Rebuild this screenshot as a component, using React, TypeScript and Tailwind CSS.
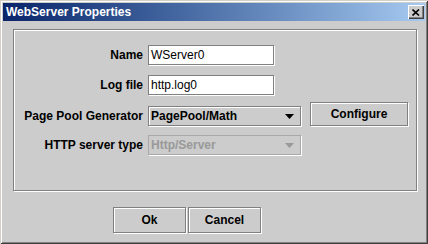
import React from 'react';

const font = { fontFamily: '"Liberation Sans", Arial, sans-serif' };

const Field = ({ value }: { value: string }) => (
  <div className="w-[126px] h-[20px] bg-white border border-[#808080] shadow-[1px_1px_0_#ffffff] flex items-center pl-[2px] text-[12px] text-black">
    {value}
  </div>
);

const Arrow = ({ color }: { color: string }) => (
  <svg width="9" height="5" viewBox="0 0 9 5" className="shrink-0">
    <polygon points="0,0 9,0 4.5,5" fill={color} />
  </svg>
);

const Combo = ({ value, disabled }: { value: string; disabled?: boolean }) => (
  <div
    className={
      disabled
        ? 'w-[153px] h-[20px] border border-[#a8a8a8] shadow-[1px_1px_0_#ffffff] flex items-center justify-between pl-[2px] pr-[6px] text-[12px] font-bold text-[#999999]'
        : 'w-[153px] h-[20px] border border-[#808080] shadow-[1px_1px_0_#ffffff,inset_1px_1px_0_#ffffff] flex items-center justify-between pl-[2px] pr-[6px] text-[12px] font-bold text-black'
    }
  >
    <span>{value}</span>
    <Arrow color={disabled ? '#999999' : '#000000'} />
  </div>
);

const Button = ({ label, className }: { label: string; className: string }) => (
  <div
    className={
      'border border-[#808080] shadow-[1px_1px_0_#ffffff,inset_1px_1px_0_#ffffff] flex items-center justify-center text-[12px] font-bold text-black ' +
      className
    }
  >
    {label}
  </div>
);

const Label = ({ text }: { text: string }) => (
  <div className="w-[129px] text-right text-[12px] font-bold text-black mr-[5px]">{text}</div>
);

export default function App() {
  return (
    <div
      style={font}
      className="w-[428px] h-[244px] bg-[#cccccc] p-[3px] flex flex-col shadow-[inset_1px_1px_0_#d4d0c8,inset_-1px_-1px_0_#404040,inset_2px_2px_0_#ffffff,inset_-2px_-2px_0_#808080]"
    >
      <div className="h-[18px] bg-linear-to-r from-[#0a246a] to-[#a6caf0] flex items-center justify-between pl-[3px] pr-[1px]">
        <span className="text-white font-bold text-[12px] leading-none">WebServer Properties</span>
        <div className="w-[16px] h-[14px] bg-[#cccccc] shadow-[inset_1px_1px_0_#ffffff,inset_-1px_-1px_0_#404040,inset_-2px_-2px_0_#808080] flex items-center justify-center">
          <svg width="8" height="7" viewBox="0 0 8 7">
            <path d="M0.5 0.5 L7 6.5 M7 0.5 L0.5 6.5" stroke="#000" strokeWidth="1.6" fill="none" />
          </svg>
        </div>
      </div>

      <div className="mt-[8px] ml-[10px] w-[404px] h-[162px] border border-[#808080] shadow-[1px_1px_0_#ffffff,inset_1px_1px_0_#ffffff] flex flex-col">
        <div className="flex items-center mt-[15px] h-[20px]">
          <Label text="Name" />
          <Field value="WServer0" />
        </div>
        <div className="flex items-center mt-[10px] h-[20px]">
          <Label text="Log file" />
          <Field value="http.log0" />
        </div>
        <div className="flex items-end mt-[7px] h-[24px]">
          <div className="flex items-center h-[20px]">
            <Label text="Page Pool Generator" />
            <Combo value="PagePool/Math" />
          </div>
          <Button label="Configure" className="ml-[9px] w-[98px] h-[24px]" />
        </div>
        <div className="flex items-center mt-[9px] h-[20px]">
          <Label text="HTTP server type" />
          <Combo value="Http/Server" disabled />
        </div>
      </div>

      <div className="flex mt-[16px] ml-[110px] gap-[2px]">
        <Button label="Ok" className="w-[73px] h-[26px]" />
        <Button label="Cancel" className="w-[73px] h-[26px]" />
      </div>
    </div>
  );
}
